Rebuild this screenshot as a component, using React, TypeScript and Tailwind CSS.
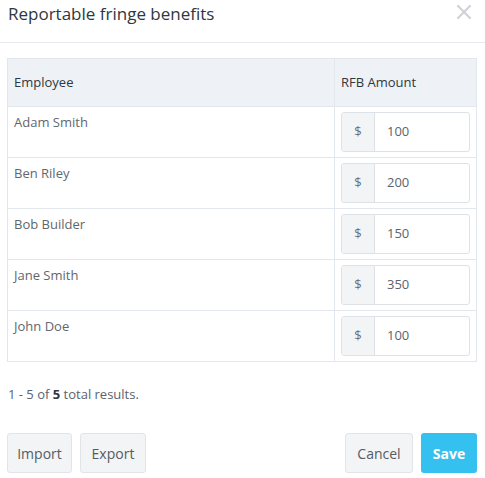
import React from "react";

const rows = [
  { name: "Adam Smith", amount: "100" },
  { name: "Ben Riley", amount: "200" },
  { name: "Bob Builder", amount: "150" },
  { name: "Jane Smith", amount: "350" },
  { name: "John Doe", amount: "100" },
];

function CloseIcon() {
  return (
    <svg width="14" height="14" viewBox="0 0 14 14" fill="none">
      <path d="M1 1L13 13M13 1L1 13" stroke="#cfd3d8" strokeWidth="2.2" strokeLinecap="square" />
    </svg>
  );
}

export default function App() {
  return (
    <div
      className="w-[485px] h-[478px] bg-white text-[#555b63]"
      style={{ fontFamily: '"Open Sans", "Liberation Sans", sans-serif' }}
    >
      <div className="h-[43px] border-b border-[#e6e9ed] flex items-start justify-between pl-2 pr-[14px] pt-[2px]">
        <h1 className="text-[17px] leading-6 text-[#2f3740]">Reportable fringe benefits</h1>
        <button className="mt-[3px]" aria-label="Close">
          <CloseIcon />
        </button>
      </div>

      <div className="pl-[7px] pr-2 pt-[15px]">
        <table className="w-full border-collapse text-[13px]">
          <thead>
            <tr className="bg-[#eef2f7]">
              <th className="h-[48px] border border-[#e2e7ee] text-left font-normal text-[#2f3740] pl-[6px]">
                Employee
              </th>
              <th className="w-[142px] border border-[#e2e7ee] text-left font-normal text-[#2f3740] pl-[6px]">
                RFB Amount
              </th>
            </tr>
          </thead>
          <tbody>
            {rows.map((r) => (
              <tr key={r.name}>
                <td className="border border-[#e2e7ee] align-top pl-[6px] pt-[5px] leading-5 text-[#61676f]">
                  {r.name}
                </td>
                <td className="border border-[#e2e7ee] px-[6px] py-[5px]">
                  <div className="flex h-[40px] rounded-[3px] border border-[#dde2e8] overflow-hidden">
                    <span className="w-[33px] flex items-center justify-center bg-[#f3f4f6] border-r border-[#dde2e8] text-[#6b6f75]">
                      $
                    </span>
                    <span className="flex-1 flex items-center pl-[12px] text-[#5c636b]">{r.amount}</span>
                  </div>
                </td>
              </tr>
            ))}
          </tbody>
        </table>

        <p className="mt-[22px] text-[13px] leading-5 pl-[1px] text-[#5c636b]">
          1 - 5 of <span className="font-bold text-[#2f3740]">5</span> total results.
        </p>

        <div className="mt-[29px] flex justify-between text-[14px]">
          <div className="flex gap-2">
            <button className="h-[40px] w-[65px] rounded-[3px] border border-[#e1e4e8] bg-[#f3f4f6] text-[#555b63]">
              Import
            </button>
            <button className="h-[40px] w-[66px] rounded-[3px] border border-[#e1e4e8] bg-[#f3f4f6] text-[#555b63]">
              Export
            </button>
          </div>
          <div className="flex gap-2">
            <button className="h-[40px] w-[68px] rounded-[3px] border border-[#e1e4e8] bg-[#f3f4f6] text-[#555b63]">
              Cancel
            </button>
            <button className="h-[40px] w-[56px] rounded-[3px] bg-[#35c1ef] text-white font-bold">
              Save
            </button>
          </div>
        </div>
      </div>
    </div>
  );
}
